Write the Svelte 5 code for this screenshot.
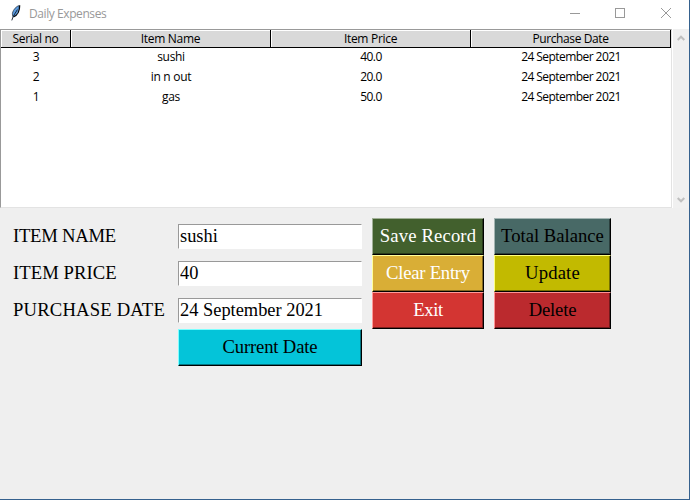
<script>
  const columns = [
    { title: 'Serial no', key: 'serial' },
    { title: 'Item Name', key: 'name' },
    { title: 'Item Price', key: 'price' },
    { title: 'Purchase Date', key: 'date' }
  ];
  const records = [
    { serial: 3, name: 'sushi', price: '40.0', date: '24 September 2021' },
    { serial: 2, name: 'in n out', price: '20.0', date: '24 September 2021' },
    { serial: 1, name: 'gas', price: '50.0', date: '24 September 2021' }
  ];
  let itemName = $state('sushi');
  let itemPrice = $state('40');
  let purchaseDate = $state('24 September 2021');
</script>

<div class="window">
  <header>
    <svg class="feather" width="12" height="18" viewBox="0 0 12 18">
      <path d="M9.4 1.5C6.4 2.1 3.2 5.6 2.4 9.2L2.8 13C6.8 12 9 7.5 9.4 1.5Z" fill="#5b9be0" />
      <path d="M9.4 1.5C6.4 2.1 3.2 5.6 2.4 9.2L2.6 12.2" fill="none" stroke="#333f4c" stroke-width=".8" />
      <path d="M9.6 1.4C9.8 6.5 7.6 11.4 3.4 12.8" fill="none" stroke="#05080c" stroke-width="1.4" />
      <path d="M7.4 5.6L3.2 12.4L1.8 16.4" fill="none" stroke="#111d2b" stroke-width=".9" />
    </svg>
    <span class="title">Daily Expenses</span>
    <svg class="controls" width="120" height="28" viewBox="0 0 120 28" fill="none" stroke="#999" shape-rendering="crispEdges">
      <path d="M10 13.5H20" />
      <rect x="55.5" y="8.5" width="9" height="9" />
      <path d="M101 8L111 18M111 8L101 18" shape-rendering="auto" />
    </svg>
  </header>

  <section class="list">
    <div class="tree">
      <div class="row head">
        {#each columns as c}<div class="cell">{c.title}</div>{/each}
      </div>
      {#each records as r}
        <div class="row">
          {#each columns as c}<div class="cell {c.key}">{r[c.key]}</div>{/each}
        </div>
      {/each}
    </div>
    <div class="scrollbar">
      <svg width="8" height="6" viewBox="0 0 8 6"><path d="M.7 5L4 1.7L7.3 5" /></svg>
      <svg width="8" height="6" viewBox="0 0 8 6"><path d="M.7 1L4 4.3L7.3 1" /></svg>
    </div>
  </section>

  <main>
    <div class="labels">
      <label for="name"><span class="l1">ITEM NAME</span></label>
      <label for="price"><span class="l2">ITEM PRICE</span></label>
      <label for="date"><span class="l3">PURCHASE DATE</span></label>
    </div>
    <div class="fields">
      <div class="field"><input id="name" bind:value={itemName} /></div>
      <div class="field"><input id="price" bind:value={itemPrice} /></div>
      <div class="field"><input id="date" bind:value={purchaseDate} /></div>
      <button class="cyan">Current Date</button>
    </div>
    <div class="actions first">
      <button class="green">Save Record</button>
      <button class="gold">Clear Entry</button>
      <button class="red">Exit</button>
    </div>
    <div class="actions second">
      <button class="slate">Total Balance</button>
      <button class="olive">Update</button>
      <button class="crimson">Delete</button>
    </div>
  </main>
</div>

<style>
  :global(body) { margin: 0; }
  * { box-sizing: border-box; }
  .window {
    width: 690px;
    height: 500px;
    display: flex;
    flex-direction: column;
    background: #efefef;
    border-right: 1px solid #35618e;
    border-bottom: 1px solid #35618e;
    overflow: hidden;
  }
  header {
    height: 29px;
    flex: none;
    display: flex;
    align-items: flex-start;
    background: #fff;
    padding-left: 10px;
    font: 12px/28px "Open Sans", "Noto Sans", sans-serif;
    color: #999;
  }
  .feather { margin-top: 4px; }
  .title { margin-left: 7px; letter-spacing: -.42px; }
  .controls { margin-left: auto; margin-right: 9px; }
  .list { height: 179px; flex: none; display: flex; }
  .tree {
    width: 672px;
    background: #fff;
    border: 1px solid #e3e3e3;
    border-top-color: #999;
    border-left-color: #999;
    font: 12px/20px "Open Sans", "Noto Sans", sans-serif;
    letter-spacing: -.3px;
    color: #000;
  }
  .row { display: grid; grid-template-columns: 70px 200px 200px 200px; height: 20px; text-align: center; white-space: nowrap; }
  .date { letter-spacing: -.56px; }
  .price { letter-spacing: -.6px; }
  .head { height: 17px; background: #d9d9d9; }
  .head .cell { line-height: 17px; border-right: 1px solid #000; border-bottom: 1px solid #000; box-shadow: inset 1px 1px #fff; }
  .head .cell:last-child { letter-spacing: -.4px; }
  .scrollbar {
    width: 17px;
    border-left: 1px solid #fff;
    background: #f0f0f0;
    display: flex;
    flex-direction: column;
    justify-content: space-between;
    align-items: center;
    padding: 6px 0 5px;
  }
  .scrollbar path { fill: none; stroke: #bfbfbf; stroke-width: 2; }
  main {
    display: flex;
    padding: 10px 0 0 13px;
    font: 18.67px/21px "Liberation Serif", "Times New Roman", serif;
    color: #000;
  }
  .labels { width: 165px; }
  label { display: flex; align-items: center; height: 37px; padding-bottom: 2px; white-space: nowrap; }
  .l1 { letter-spacing: -.25px; }
  .l2 { letter-spacing: .05px; }
  .l3 { letter-spacing: .17px; }
  .fields { width: 184px; }
  .field { height: 37px; padding-top: 6px; }
  input {
    display: block;
    width: 184px;
    height: 25px;
    padding: 0 1px;
    border: 1px solid #fff;
    border-top-color: #999;
    border-left-color: #999;
    border-radius: 0;
    outline: 0;
    background: #fff;
    font: inherit;
    font-size: 18.4px;
    color: #000;
  }
  button {
    display: block;
    width: 100%;
    height: 37px;
    padding: 0 0 2px;
    border: 1px solid #000;
    border-top-color: var(--light);
    border-left-color: var(--light);
    border-radius: 0;
    background: var(--face);
    box-shadow: inset -1px -1px var(--dark);
    font: inherit;
    color: #000;
    white-space: nowrap;
  }
  .actions { margin-left: 10px; }
  .first { width: 112px; }
  .second { width: 117px; }
  .cyan { --face: #04c4d9; --light: #7dffff; --dark: #037582; letter-spacing: -.17px; }
  .green { --face: #42602d; --light: #a0af96; --dark: #273a1b; color: #fff; letter-spacing: .14px; }
  .gold { --face: #d9ae36; --light: #ffff9a; --dark: #826820; color: #fff; letter-spacing: -.25px; }
  .red { --face: #d33532; --light: #ff9a98; --dark: #7e201e; color: #fff; letter-spacing: -.4px; }
  .slate { --face: #486966; --light: #a3b4b2; --dark: #2b3f3d; }
  .olive { --face: #c2ba00; --light: #ffff7f; --dark: #747000; letter-spacing: .15px; }
  .crimson { --face: #bb2a2e; --light: #ff9294; --dark: #70191b; letter-spacing: -.2px; }
</style>
